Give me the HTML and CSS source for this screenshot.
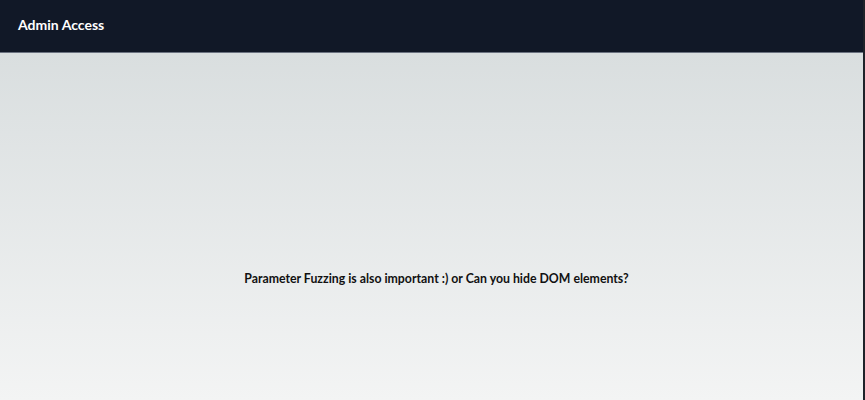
FILE: index.html
```html
<!DOCTYPE html>
<html>
<head>
<meta charset="utf-8">
<link rel="stylesheet" href="styles.css">
</head>
<body>
<header class="topbar">
  <h1 class="brand">Admin Access</h1>
</header>
<main class="content">
  <p class="message">Parameter Fuzzing is also important :) or Can you hide DOM elements?</p>
</main>
</body>
</html>
```

FILE: styles.css
```css
html, body {
  margin: 0;
  padding: 0;
  height: 100%;
}
body {
  font-family: Lato, "Noto Sans", sans-serif;
  display: flex;
  flex-direction: column;
  border-right: 2px solid #1f2229;
  box-sizing: border-box;
}
.topbar {
  background: #111827;
  height: 53px;
  box-sizing: border-box;
  border-bottom: 1px solid #6b7280;
  display: flex;
  align-items: center;
  padding: 0 18px;
}
.brand {
  margin: 0 0 4px;
  color: #ffffff;
  font-size: 14px;
  font-weight: 700;
}
.content {
  flex: 1;
  background: linear-gradient(to bottom, #d9dedf, #f3f4f4);
  display: flex;
  justify-content: center;
  padding: 218px 0 0 10px;
  box-sizing: border-box;
}
.message {
  margin: 0;
  font-size: 12.3px;
  font-weight: 700;
  color: #111111;
}
```
